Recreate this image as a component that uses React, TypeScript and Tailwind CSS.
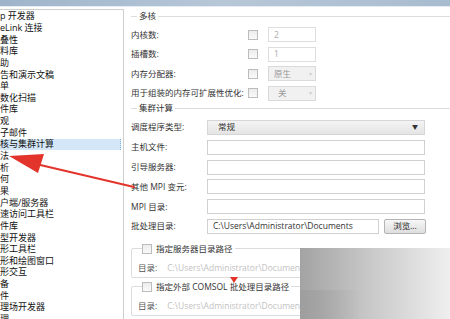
import type { ReactNode } from 'react';

const NAV_ITEMS = [
  'p 开发器',
  'eLink 连接',
  '叠性',
  '料库',
  '助',
  '告和演示文稿',
  '单',
  '数化扫描',
  '件库',
  '观',
  '子邮件',
  '核与集群计算',
  '法',
  '析',
  '何',
  '果',
  '户端/服务器',
  '速访问工具栏',
  '件库',
  '型开发器',
  '形工具栏',
  '形和绘图窗口',
  '形交互',
  '备',
  '件',
  '理场开发器',
  '理',
];

const SELECTED = 11;

function Check() {
  return <span className="block h-[10px] w-[10px] shrink-0 border border-[#bcbcbc] bg-gradient-to-b from-[#ececec] to-[#fafafa]" />;
}

function Row({ label, labelW, children }: { label: string; labelW: string; children: ReactNode }) {
  return (
    <div className="flex h-[15px] items-center">
      <span className={`${labelW} shrink-0 whitespace-nowrap text-[#333]`}>{label}</span>
      {children}
    </div>
  );
}

function TextBox({ value, className = '' }: { value?: string; className?: string }) {
  return (
    <div className={`flex h-[15px] items-center whitespace-nowrap border border-[#d0d0d0] bg-white px-[5px] text-[#333] ${className}`}>
      {value}
    </div>
  );
}

export default function App() {
  return (
    <div
      className="relative flex h-[319px] w-[450px] flex-col overflow-hidden bg-white text-[8.5px] leading-[12px]"
      style={{ fontFamily: '"Open Sans", "Noto Sans CJK SC", sans-serif' }}
    >
      {/* window edge */}
      <div className="h-[6px] shrink-0 bg-gradient-to-r from-[#9fb4ca] via-[#b7c7d8] to-[#a9bccf]" />
      <div className="h-[1px] shrink-0 bg-[#e6ecf2]" />

      <div className="flex min-h-0 flex-1">
        {/* tree */}
        <div className="mt-[2px] w-[124px] shrink-0 border-r border-t border-[#cfcfcf] pt-[0.5px] text-[9px]">
          {NAV_ITEMS.map((item, i) => (
            <div
              key={i}
              className={`flex h-[11.65px] items-center whitespace-nowrap text-[#111] ${
                i === SELECTED ? 'mr-[2px] border-r border-dotted border-[#7fb2de] bg-[#d3e7f8]' : ''
              }`}
            >
              {item}
            </div>
          ))}
        </div>

        {/* settings */}
        <div className="flex-1 pl-[7px] pt-[3px]">
          <fieldset className="border-t border-[#dcdcdc]">
            <legend className="ml-[6px] px-[2px] text-[#333]">多核</legend>
            <div className="mt-[5px] flex flex-col gap-[4.67px]">
              <Row label="内核数:" labelW="w-[117px]">
                <Check />
                <TextBox value="2" className="ml-[10px] w-[48px] border-[#dedede] bg-[#fcfcfc] text-[#aaa]" />
              </Row>
              <Row label="插槽数:" labelW="w-[117px]">
                <Check />
                <TextBox value="1" className="ml-[10px] w-[48px] border-[#dedede] bg-[#fcfcfc] text-[#aaa]" />
              </Row>
              <Row label="内存分配器:" labelW="w-[117px]">
                <Check />
                <div className="ml-[10px] flex h-[15px] w-[48px] items-center justify-between border border-[#dadada] bg-[#f1f1f1] pl-[5px] pr-[3px] text-[#999]">
                  原生<span className="text-[6px] text-[#d0d0d0]">▾</span>
                </div>
              </Row>
              <Row label="用于组装的内存可扩展性优化:" labelW="w-[117px]">
                <Check />
                <div className="ml-[10px] flex h-[15px] w-[48px] items-center justify-between border border-[#dadada] bg-[#f1f1f1] pl-[9px] pr-[3px] text-[#999]">
                  关<span className="text-[6px] text-[#d0d0d0]">▾</span>
                </div>
              </Row>
            </div>
          </fieldset>

          <fieldset className="mt-[1.5px] border-t border-[#dcdcdc]">
            <legend className="ml-[6px] px-[2px] text-[#333]">集群计算</legend>
            <div className="mt-[5.5px] flex flex-col gap-[4.8px]">
              <Row label="调度程序类型:" labelW="w-[76px]">
                <div className="flex h-[15px] w-[218px] items-center justify-between border border-[#d6d6d6] bg-gradient-to-b from-[#f4f4f4] to-[#e4e4e4] pl-[10px] pr-[6px] text-[#333]">
                  常规<span className="text-[6px] text-[#333]">▼</span>
                </div>
              </Row>
              <Row label="主机文件:" labelW="w-[76px]">
                <TextBox className="w-[218px]" />
              </Row>
              <Row label="引导服务器:" labelW="w-[76px]">
                <TextBox className="w-[218px]" />
              </Row>
              <Row label="其他 MPI 变元:" labelW="w-[76px]">
                <TextBox className="w-[218px]" />
              </Row>
              <Row label="MPI 目录:" labelW="w-[76px]">
                <TextBox className="w-[218px]" />
              </Row>
              <Row label="批处理目录:" labelW="w-[76px]">
                <TextBox value="C:\Users\Administrator\Documents" className="w-[172px] px-[1px]" />
                <button className="ml-[5px] flex h-[15px] w-[42px] items-center justify-center rounded-[2px] border border-[#b4b4b4] bg-gradient-to-b from-[#f7f7f7] to-[#dedede] text-[#222]">
                  浏览...
                </button>
              </Row>
            </div>
          </fieldset>

          <fieldset className="mt-[9px] w-[294px] rounded-[2px] border border-[#dcdcdc] pb-[3px] pl-[6px]">
            <legend className="ml-[4px] flex items-center gap-[4px] pr-[2px] text-[#333]">
              <Check />
              指定服务器目录路径
            </legend>
            <div className="mt-[7px] flex items-center gap-[10px] whitespace-nowrap">
              <span className="text-[#555]">目录:</span>
              <span className="text-[#c2c2c2]">C:\Users\Administrator\Documents</span>
            </div>
          </fieldset>

          <fieldset className="mt-[3px] w-[294px] rounded-[2px] border border-[#dcdcdc] pb-[3px] pl-[6px]">
            <legend className="ml-[4px] flex items-center gap-[4px] whitespace-nowrap pr-[2px] text-[#333]">
              <Check />
              <span>
                指定外部 COMSOL{' '}
                <span className="relative">
                  批
                  <span className="absolute left-1/2 top-[-4px] h-0 w-0 -translate-x-1/2 border-x-[4px] border-t-[6px] border-x-transparent border-t-[#e3342c]" />
                </span>
                处理目录路径
              </span>
            </legend>
            <div className="mt-[7px] flex items-center gap-[10px] whitespace-nowrap">
              <span className="text-[#555]">目录:</span>
              <span className="text-[#c2c2c2]">C:\Users\Administrator\Documents</span>
            </div>
          </fieldset>
        </div>
      </div>

      {/* mosaic watermark */}
      <div className="absolute left-[300px] top-[248px] h-[71px] w-[150px] bg-gradient-to-r from-[#a3a3a3] via-[#cbcbcb] to-[#efefef]" />
      <div className="absolute left-[300px] top-[290px] h-[29px] w-[60px] bg-gradient-to-r from-[#9a9a9a] to-transparent opacity-60" />

      {/* arrow */}
      <svg className="pointer-events-none absolute left-0 top-0" width="450" height="319" viewBox="0 0 450 319">
        <line x1="36" y1="164" x2="134" y2="187" stroke="#e3342c" strokeWidth="2" strokeLinecap="round" />
        <polygon points="9,156 44,154 38,173" fill="#e3342c" />
      </svg>
    </div>
  );
}
